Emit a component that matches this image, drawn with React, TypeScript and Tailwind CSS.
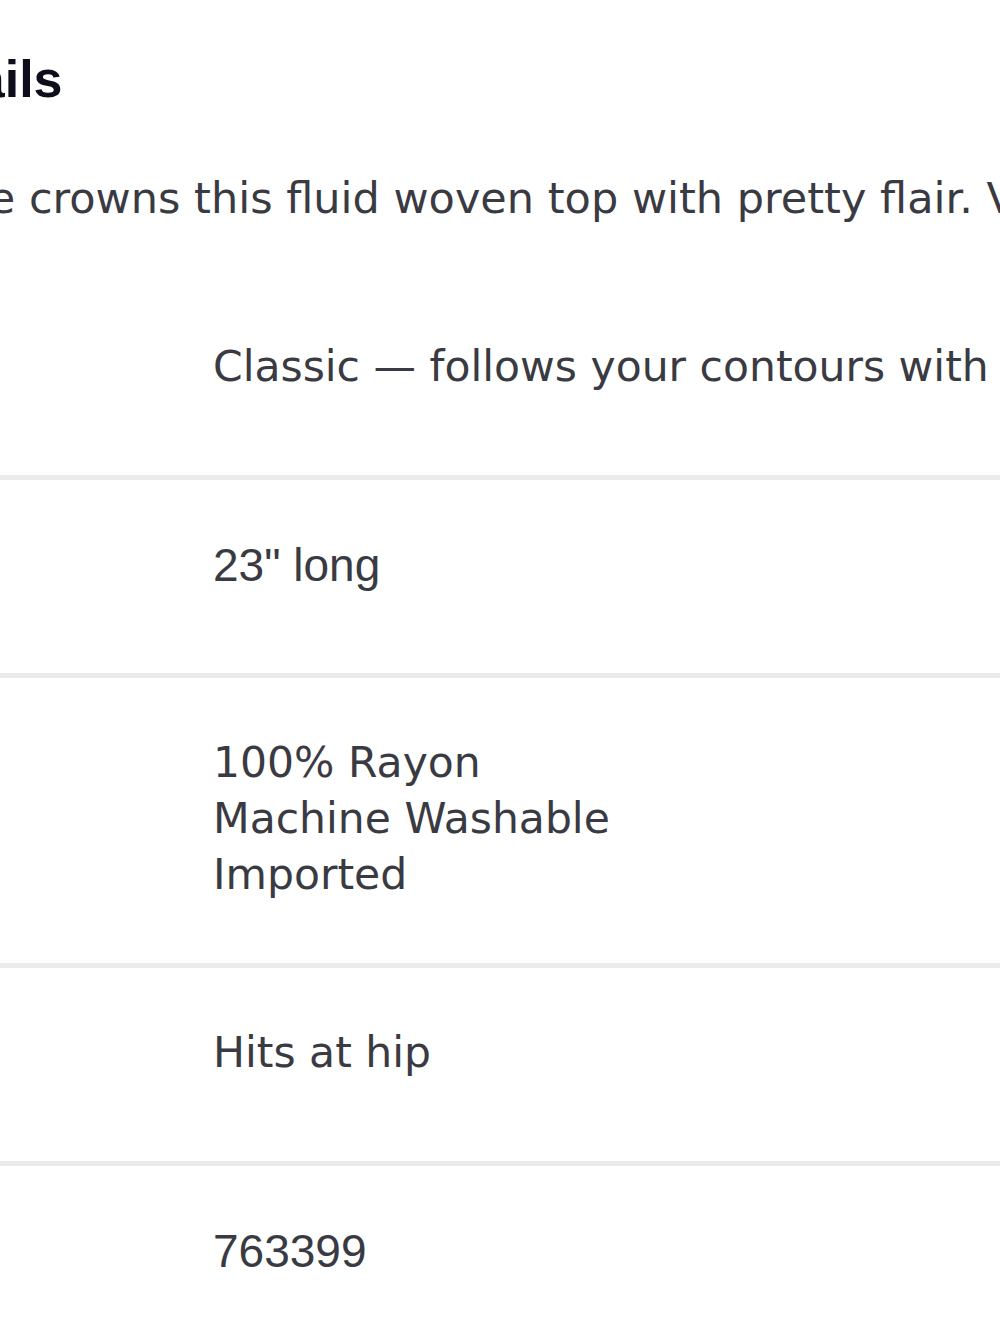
import React from 'react'

interface DetailRow {
  label: string
  lines: string[]
  arial?: boolean
}

const rows: DetailRow[] = [
  { label: 'Fit', lines: ['Classic — follows your contours with ease through the bust and hip.'] },
  { label: 'Size', lines: ['23" long'], arial: true },
  { label: 'Care', lines: ['100% Rayon', 'Machine Washable', 'Imported'] },
  { label: 'Hem', lines: ['Hits at hip'] },
  { label: 'SKU', lines: ['763399'], arial: true },
]

const App: React.FC = () => {
  return (
    <div className="w-full min-h-[1333px] overflow-hidden bg-white">
      <div className="-ml-[108px] w-[1600px] pt-[48px]">
        <h2 className="font-['Liberation_Sans',Arial,sans-serif] font-bold text-[52px] leading-[62px] text-[#0e0e1a]">
          Details
        </h2>

        <p className="mt-[60px] whitespace-nowrap font-['DejaVu_Sans',sans-serif] text-[43px] leading-[56px] text-[#3a3a42]">
          Ruffle crowns this fluid woven top with pretty flair. V-neckline with a keyhole tie.
        </p>

        <div className="mt-[56px]">
          {rows.map((row, i) => (
            <div
              key={row.label}
              className={`flex min-h-[198px] pt-[57px] pb-[60px] ${
                i < rows.length - 1 ? 'border-b-[5px] border-[#ebebeb]' : ''
              }`}
            >
              <div className="w-[321px] shrink-0 font-['Liberation_Sans',Arial,sans-serif] font-bold text-[40px] leading-[56px] text-[#0e0e1a]">
                {row.label}
              </div>
              <div
                className={`whitespace-nowrap leading-[56px] text-[#3a3a42] ${
                  row.arial
                    ? "font-['Liberation_Sans',Arial,sans-serif] text-[46px]"
                    : "font-['DejaVu_Sans',sans-serif] text-[42.5px]"
                }`}
              >
                {row.lines.map((line) => (
                  <div key={line}>{line}</div>
                ))}
              </div>
            </div>
          ))}
        </div>
      </div>
    </div>
  )
}

export default App
